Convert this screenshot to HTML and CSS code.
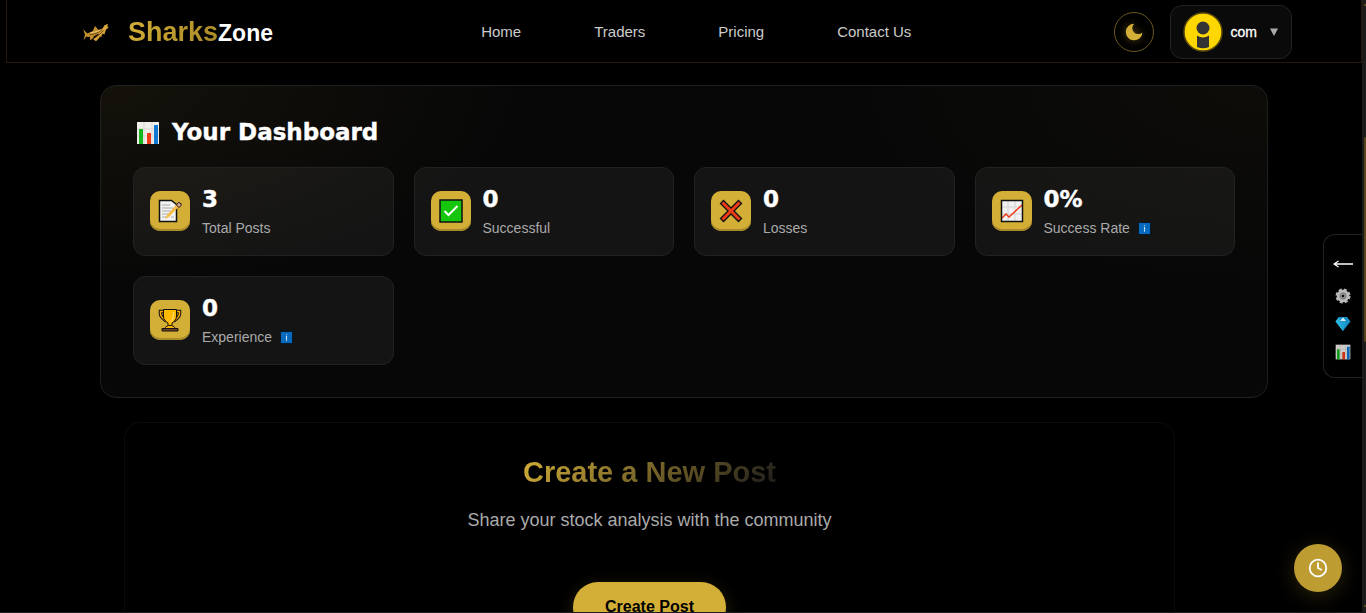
FILE: index.html
```html
<!DOCTYPE html>
<html lang="en">
<head>
<meta charset="utf-8">
<meta name="viewport" content="width=device-width, initial-scale=1">
<title>SharksZone</title>
<link rel="stylesheet" href="styles.css">
</head>
<body>
<svg class="defs" aria-hidden="true">
  <symbol id="bars" viewBox="0 0 24 24">
    <path d="M1 1h22v22H1z" fill="#f1efec"/>
    <path d="M8 1v22M16 1v22M1 8h22M1 15h22" stroke="#d9d6d2" fill="none"/>
    <path d="M3 8h4v15H3z" fill="#17b81f"/><path d="M11 12h4v11h-4z" fill="#f03a17"/><path d="M18 4h4v19h-4z" fill="#0f78d0"/>
  </symbol>
  <symbol id="info" viewBox="0 0 14 14">
    <path d="M.5.5h13v13H.5z" fill="#0669bd" stroke="#03131f"/><path d="M7 3.500v1M7 5.500v5" stroke="#c4dcf0" stroke-width="1.200"/>
  </symbol>
</svg>
<div class="app">
  <header class="header">
    <a class="brand" href="#">
      <svg class="shark" viewBox="0 0 30 24" aria-hidden="true">
        <path d="M1 9l4.500 4.500c2-1 4-1.500 6-2.500l2.500-5.500 3.500 4c4-.5 6-2 10-6v4.500l-4 3-3 7-3-4-5 3c0 2-2 3-4 4l0-4c-2 1-3 .5-4 0l-3 4 1.500-6z" fill="#c3902e"/>
        <path d="M12 20c5-3 9-8 12-15l4-2-1 3 2 1-3 2-2 6-2-2c-2 4-5 7-7 9z" fill="#dba53d"/>
        <path d="M8 15c5 0 9-2 13-5" fill="none" stroke="#5a390e" stroke-width=".9"/>
        <path d="M14 18c4-2 7-5 9-8" fill="none" stroke="#5a390e" stroke-width=".9"/>
        <path d="M9 13c4-1 8-1 11-3" fill="none" stroke="#f5d77f" stroke-width=".9"/>
      </svg>
      <span class="brand-text"><span class="brand-gold">Sharks</span><span class="brand-white">Zone</span></span>
    </a>
    <nav class="nav" aria-label="Main">
      <a href="#">Home</a><a href="#">Traders</a><a href="#">Pricing</a><a href="#">Contact Us</a>
    </nav>
    <div class="actions">
      <button class="theme" type="button" aria-label="Toggle theme">
        <svg viewBox="0 0 20 20"><path d="M10.200 1.700A8.300 8.300 0 1 0 18.400 10.500 5.100 5.100 0 1 1 10.200 1.700z" fill="#d4af37"/></svg>
      </button>
      <button class="user" type="button">
        <svg class="avatar" viewBox="0 0 40 40" aria-hidden="true">
          <circle cx="20" cy="20" r="19" fill="#ffd700" stroke="#5c4b0d" stroke-width="1.500"/>
          <circle cx="20" cy="16" r="6.500" fill="#333"/>
          <path d="M14 23.500q6 4 12 0V35q-6 2.500-12 0z" fill="#333"/>
        </svg>
        <span class="user-name">com</span>
        <svg class="caret" viewBox="0 0 8 8" aria-hidden="true"><path d="M0 .5h8L4 8z" fill="#aaa"/></svg>
      </button>
    </div>
  </header>

  <main class="main">
    <section class="dashboard" aria-labelledby="dash-title">
      <h1 class="dash-title" id="dash-title"><svg class="title-icon" aria-hidden="true"><use href="#bars"/></svg>Your Dashboard</h1>
      <div class="stats">
        <article class="stat">
          <span class="tile"><svg viewBox="0 0 24 24" aria-hidden="true">
            <path d="M1.500 1.500h12l5 4v17h-17z" fill="#f3f3f3" stroke="#111" stroke-width="1.500"/>
            <path d="M4 6h8M4 9h11M4 12h9M4 15h8M4 18h5M13 18h3" stroke="#aaa"/>
            <path d="M7 20l2-4L19 5l2.500 2L11 18z" fill="#f7bd45"/><path d="M18.500 6l2-2.500 2.500 1v2l-2 2z" fill="#e7a99a" stroke="#111"/>
          </svg></span>
          <div class="stat-text"><strong class="value">3</strong><span class="label">Total Posts</span></div>
        </article>
        <article class="stat">
          <span class="tile"><svg viewBox="0 0 24 24" aria-hidden="true">
            <path d="M1 1h22v22H1z" fill="#16c60c" stroke="#111" stroke-width="1.500"/><path d="M5.500 12l4 4L18.500 7" fill="none" stroke="#fff" stroke-width="2"/>
          </svg></span>
          <div class="stat-text"><strong class="value">0</strong><span class="label">Successful</span></div>
        </article>
        <article class="stat">
          <span class="tile"><svg viewBox="0 0 24 24" aria-hidden="true">
            <path d="M4.500 1.500L12 9l7.500-7.500 3 3L15 12l7.500 7.500-3 3L12 15l-7.500 7.500-3-3L9 12 1.500 4.500z" fill="#f03a17" stroke="#111" stroke-width="1.300"/>
          </svg></span>
          <div class="stat-text"><strong class="value">0</strong><span class="label">Losses</span></div>
        </article>
        <article class="stat">
          <span class="tile"><svg viewBox="0 0 24 24" aria-hidden="true">
            <path d="M1.500 1.500h21v21h-21z" fill="#f2f0f0"/><path d="M8 2v20M15 2v20M2 8h20M2 15h20" stroke="#d3d3d3"/>
            <path d="M2 19l4-4 3 3L22 6" fill="none" stroke="#f03a17" stroke-width="1.500"/><path d="M1.500 1.500h21v21h-21z" fill="none" stroke="#111" stroke-width="1.500"/>
          </svg></span>
          <div class="stat-text"><strong class="value">0%</strong><span class="label">Success Rate <svg class="info" role="img" aria-label="Information"><use href="#info"/></svg></span></div>
        </article>
        <article class="stat">
          <span class="tile"><svg viewBox="0 0 24 24" aria-hidden="true">
            <path d="M7 3.500H2.500V6c0 3 3 5 6 7M17 3.500h4.500V6c0 3-3 5-6 7" fill="none" stroke="#111" stroke-width="3.500"/>
            <path d="M7 3.500H2.500V6c0 3 3 5 6 7M17 3.500h4.500V6c0 3-3 5-6 7" fill="none" stroke="#f7a700" stroke-width="1.500"/>
            <path d="M5.500 1.500h13V8c0 4-2 5-4.500 7v3h-4v-3C7.500 13 5.500 12 5.500 8z" fill="#ffb900" stroke="#111"/>
            <path d="M7 20.500c0-2 2-2 3.500-3h3c1.500 1 3.500 1 3.500 3z" fill="#ffb900" stroke="#111"/>
            <path d="M4 23v-2.500h16V23z" fill="#74412b" stroke="#111"/><path d="M15.500 4c.5 5-1 8-3 10" fill="none" stroke="#ffd35c" stroke-width="1.500"/>
          </svg></span>
          <div class="stat-text"><strong class="value">0</strong><span class="label">Experience <svg class="info" role="img" aria-label="Information"><use href="#info"/></svg></span></div>
        </article>
      </div>
    </section>

    <section class="create" aria-labelledby="create-title">
      <h2 class="create-title" id="create-title">Create a New Post</h2>
      <p class="create-sub">Share your stock analysis with the community</p>
      <button class="create-btn" type="button">Create Post</button>
    </section>
  </main>
</div>

<aside class="side" aria-label="Quick tools">
  <button type="button" aria-label="Expand"><svg class="arrow" viewBox="0 0 20 20"><path d="M1 9h19M5.500 6L1 9l4.500 3" fill="none" stroke="#fff" stroke-width="1.300"/></svg></button>
  <button type="button" aria-label="Settings"><svg viewBox="0 0 16 16">
    <circle cx="8" cy="8" r="6.300" fill="none" stroke="#b6b6b6" stroke-width="2.400" stroke-dasharray="3 1.950"/>
    <circle cx="8" cy="8" r="4.800" fill="#999" stroke="#b9b9b9" stroke-width="2.800"/><circle cx="8" cy="8" r="3" fill="#999" stroke="#777"/><circle cx="8" cy="8" r="1.300" fill="#080808"/>
  </svg></button>
  <button type="button" aria-label="Premium"><svg viewBox="0 0 16 16">
    <path d="M4 1h8l3.500 4.500L8 15 .5 5.500z" fill="#168fc7"/><path d="M4 1l1 4.500L8 15 .5 5.500z" fill="#29b5de"/><path d="M8 1.500L5 5h6z" fill="#d5eef5"/><path d="M5 5.500h6L8 15z" fill="#21a4d5"/>
  </svg></button>
  <button type="button" aria-label="Statistics"><svg class="dim"><use href="#bars"/></svg></button>
</aside>
<button class="fab" type="button" aria-label="History"><svg viewBox="0 0 20 20"><circle cx="10" cy="10" r="8.300" fill="none" stroke="#fff" stroke-width="1.800"/><path d="M10 4.500V10l3.800 2" fill="none" stroke="#fff" stroke-width="1.800"/></svg></button>
<div class="scroll" aria-hidden="true"><span class="scroll-up"></span><span class="scroll-thumb"></span><span class="scroll-down"></span></div>
</body>
</html>
```

FILE: styles.css
```css
* { box-sizing: border-box; }
body {
  margin: 0;
  background: #000;
  color: #fff;
  font-family: "Liberation Sans", Arial, sans-serif;
}
button { font: inherit; color: inherit; cursor: pointer; }
a { color: inherit; text-decoration: none; }
svg { display: block; }
.defs { position: absolute; width: 0; height: 0; }

.app {
  height: 100vh;
  margin-right: 4px;
  padding-left: 6px;
  overflow: hidden;
  border-bottom: 1px solid #1d1d1f;
}
.header {
  display: flex;
  align-items: center;
  justify-content: space-between;
  padding: 5px 69px 3px 75px;
  border: 1px solid #221b0a;
  border-top: 0;
}
.brand { display: flex; align-items: center; gap: 18px; }
.shark { width: 28px; height: 22px; }
.brand-text { padding-top: 3px; font-weight: 700; line-height: 32px; }
.brand-gold {
  font-size: 27px;
  background: linear-gradient(120deg, #d4af37, #a88828);
  -webkit-background-clip: text;
  background-clip: text;
  color: transparent;
}
.brand-white { font-size: 23px; }
.nav { display: flex; gap: 73px; padding: 0 0 2px 6px; font-size: 15px; color: #ccc; }
.actions { display: flex; align-items: center; gap: 16px; }
.theme {
  display: grid;
  place-items: center;
  width: 40px;
  height: 40px;
  padding: 0;
  border: 1px solid #6b581c;
  border-radius: 50%;
  background: #000;
}
.theme svg { width: 20px; height: 20px; filter: drop-shadow(0 0 4px #d4af3766); }
.user {
  display: flex;
  align-items: center;
  padding: 6px 13px 6px 12px;
  border: 1px solid #222;
  border-radius: 12px;
  background: #0a0a0a;
}
.avatar { width: 40px; height: 40px; }
.user-name { margin: 0 13px 0 8px; font-size: 14px; -webkit-text-stroke: 0.3px #fff; }
.caret { width: 8px; height: 8px; }

.main { padding: 22px 94px 0; }
.dashboard {
  padding: 32px;
  border: 1px solid #202020;
  border-radius: 16px;
  background:
    radial-gradient(ellipse 420px 200px at 0 0, #d4af3710, transparent),
    radial-gradient(ellipse 420px 200px at 100% 0, #d4af3708, transparent),
    #070707;
}
.dash-title {
  display: flex;
  align-items: center;
  gap: 12px;
  margin: 0 0 20px;
  padding-left: 3px;
  font: 700 23px/29px "DejaVu Sans", sans-serif;
  -webkit-text-stroke: 0.4px #fff;
}
.title-icon { width: 24px; height: 24px; }
.stats { display: grid; grid-template-columns: repeat(4, 1fr); gap: 20px; }
.stat {
  display: flex;
  align-items: center;
  gap: 12px;
  padding: 16px 16px 17px;
  border: 1px solid #222;
  border-radius: 12px;
  background: #ffffff0e;
}
.tile {
  display: grid;
  place-items: center;
  width: 40px;
  height: 40px;
  border-radius: 10px;
  background: #d4af37;
  box-shadow: inset 0 -2px 0 #a88a2a;
}
.tile svg { width: 24px; height: 24px; }
.stat-text { display: grid; gap: 4px; }
.value { font: 700 23px/30px "DejaVu Sans", sans-serif; -webkit-text-stroke: 0.4px #fff; }
.label { display: flex; align-items: center; gap: 8px; font-size: 14px; line-height: 20px; color: #aaa; }
.info { width: 13px; height: 13px; }

.create {
  display: flex;
  flex-direction: column;
  align-items: center;
  margin: 24px 93px 0 24px;
  padding: 32px;
  border: 1px solid #0b0b0b;
  border-radius: 16px;
}
.create-title {
  margin: 0 0 18px;
  font-size: 29px;
  line-height: 34px;
  background: linear-gradient(135deg, #d4af37, #1a1a1a);
  -webkit-background-clip: text;
  background-clip: text;
  color: transparent;
}
.create-sub { margin: 0 0 48px; font-size: 18px; line-height: 27px; color: #aaa; }
.create-btn {
  padding: 16px 32px;
  border: 0;
  border-radius: 26px;
  background: #d4af37;
  box-shadow: 0 4px 16px #d4af3733;
  font-size: 16px;
  font-weight: 700;
  color: #000;
}

.side {
  position: fixed;
  top: 234px;
  right: 4px;
  display: grid;
  justify-items: center;
  gap: 12px;
  padding: 19px 9px 17px;
  border: 1px solid #222;
  border-right: 0;
  border-radius: 12px 0 0 12px;
  background: #000;
}
.side button { padding: 0; border: 0; background: none; }
.side svg { width: 16px; height: 16px; }
.side .arrow { width: 20px; height: 22px; }
.dim { opacity: .85; }
.fab {
  position: fixed;
  right: 24px;
  bottom: 21px;
  display: grid;
  place-items: center;
  width: 48px;
  height: 48px;
  padding: 0;
  border: 0;
  border-radius: 50%;
  background: #bd9c31;
  box-shadow: 0 4px 20px #d4af3733;
}
.fab svg { width: 20px; height: 20px; }

.scroll {
  position: fixed;
  top: 0;
  right: 0;
  bottom: 0;
  display: grid;
  grid-template-rows: 137px 205px 1fr;
  width: 4px;
  padding-left: 2px;
  background: #1b1b1c;
}
.scroll-up { height: 6px; border-bottom: 2px solid #574719; }
.scroll-thumb { border-radius: 2px 0 0 2px; background: #574519; }
.scroll-down { align-self: end; height: 8px; border-top: 2px solid #574719; }
```
